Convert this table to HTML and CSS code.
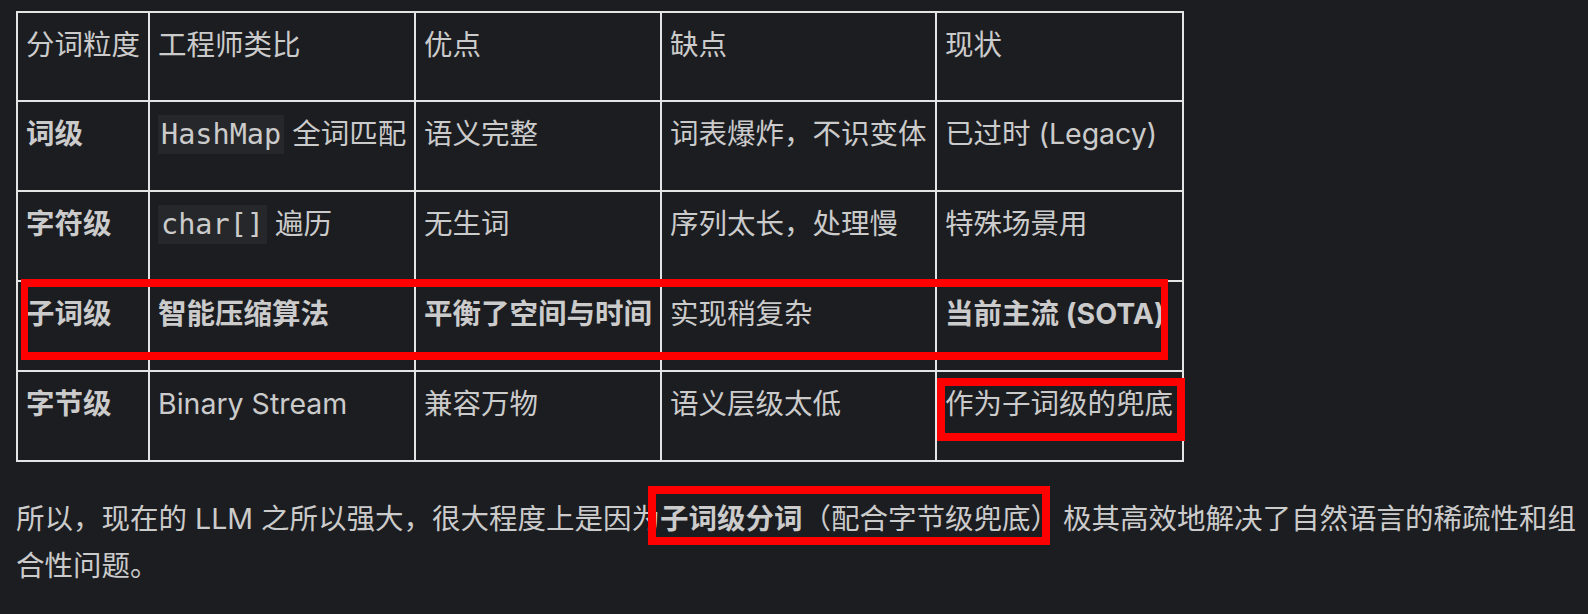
FILE: index.html
```html
<!DOCTYPE html>
<html lang="zh-CN">
<head>
<meta charset="utf-8">
<title>分词粒度</title>
<link rel="stylesheet" href="styles.css">
</head>
<body>
<div class="page">
  <table class="grid">
    <colgroup>
      <col class="c1"><col class="c2"><col class="c3"><col class="c4"><col class="c5">
    </colgroup>
    <thead>
      <tr class="head">
        <th>分词粒度</th><th>工程师类比</th><th>优点</th><th>缺点</th><th>现状</th>
      </tr>
    </thead>
    <tbody>
      <tr>
        <td><strong>词级</strong></td>
        <td><code>HashMap</code> 全词匹配</td>
        <td>语义完整</td>
        <td>词表爆炸，不识变体</td>
        <td>已过时 (Legacy)</td>
      </tr>
      <tr>
        <td><strong>字符级</strong></td>
        <td><code>char[]</code> 遍历</td>
        <td>无生词</td>
        <td>序列太长，处理慢</td>
        <td>特殊场景用</td>
      </tr>
      <tr>
        <td><strong>子词级</strong></td>
        <td><strong>智能压缩算法</strong></td>
        <td><strong>平衡了空间与时间</strong></td>
        <td>实现稍复杂</td>
        <td><strong>当前主流 (SOTA)</strong></td>
      </tr>
      <tr>
        <td><strong>字节级</strong></td>
        <td>Binary Stream</td>
        <td>兼容万物</td>
        <td>语义层级太低</td>
        <td>作为子词级的兜底</td>
      </tr>
    </tbody>
  </table>
  <p class="note">所以，现在的 LLM 之所以强大，很大程度上是因为<strong>子词级分词</strong>（配合字节级兜底）<span class="gap">极其高效地解决了自然语言的稀疏性和组合性问题。</span></p>

  <div class="mark mark-row"></div>
  <div class="mark mark-cell"></div>
  <div class="mark mark-text"></div>
</div>
</body>
</html>
```

FILE: styles.css
```css
html, body {
  margin: 0;
  padding: 0;
  background: #1c1d21;
}

.page {
  position: relative;
  min-height: 614px;
  box-sizing: border-box;
  padding: 11px 6px 0 16px;
  color: #cbcbcb;
  font-family: Inter, "Noto Sans CJK SC", sans-serif;
  font-size: 28.5px;
}

.grid {
  border-collapse: separate;
  border-spacing: 0;
  table-layout: fixed;
  width: 1168px;
  border-top: 2px solid #e4e4e4;
  border-left: 2px solid #e4e4e4;
}

.c1 { width: 132px; }
.c2 { width: 266px; }
.c3 { width: 246px; }
.c4 { width: 275px; }
.c5 { width: 247px; }

.grid tr { height: 90px; }
.grid tr.head { height: 89px; }

.grid th,
.grid td {
  box-sizing: border-box;
  border-right: 2px solid #e4e4e4;
  border-bottom: 2px solid #e4e4e4;
  padding: 12px 8px 0;
  vertical-align: top;
  text-align: left;
  font-weight: 400;
  line-height: 40px;
  white-space: nowrap;
}

strong {
  font-weight: 700;
}

code {
  font-family: "DejaVu Sans Mono", monospace;
  font-size: 28.5px;
  background: #26272b;
  padding: 3px 3px;
}

.note {
  margin: 33px 0 0;
  line-height: 47px;
}

.note .gap {
  margin-left: 4px;
}

.mark {
  position: absolute;
  box-sizing: border-box;
  border: 8px solid #fe0000;
}

.mark-row {
  left: 21px;
  top: 279px;
  width: 1147px;
  height: 81px;
  border-left-width: 7px;
  border-right-width: 7px;
}

.mark-cell {
  left: 937px;
  top: 378px;
  width: 248px;
  height: 63px;
}

.mark-text {
  left: 648px;
  top: 486px;
  width: 402px;
  height: 59px;
}
```
